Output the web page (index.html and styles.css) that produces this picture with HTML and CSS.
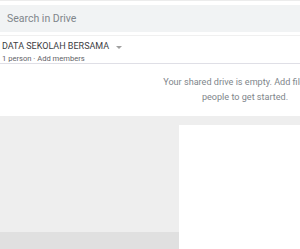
FILE: index.html
```html
<!DOCTYPE html>
<html lang="en">
<head>
	<meta charset="UTF-8">
	<title>Shared drive</title>
	<link rel="stylesheet" href="styles.css">
</head>
<body>
	<div class="page">
		<header class="header">
			<div class="search">Search in Drive</div>
		</header>
		<div class="driveInfo">
			<div class="driveName">
				DATA SEKOLAH BERSAMA
				<span class="caret"></span>
			</div>
			<div class="members">1 person · Add members</div>
		</div>
		<div class="empty">
			Your shared drive is empty. Add files and<br>
			people to get started.
		</div>
		<div class="lower">
			<div class="side">
				<div class="sideFill"></div>
				<div class="sideFoot"></div>
			</div>
			<div class="panel"></div>
		</div>
	</div>
</body>
</html>
```

FILE: styles.css
```css
body{
	margin: 0;padding: 0;
}
.page{
	width: 300px;
	height: 249px;
	overflow: hidden;
	font-family: Roboto, "Liberation Sans", sans-serif;
	display: flex;
	flex-direction: column;
	background: #fff;
}
.header{
	border-top: 1px solid #ececec;
	padding: 4px 0 3px;
	border-bottom: 1px solid #f0f0f0;
}
.search{
	height: 27px;
	line-height: 27px;
	background-color: #f1f3f4;
	padding-left: 7px;
	font-size: 10.5px;
	color: #80868b;
}
.driveInfo{
	padding: 4px 0 0 2px;
	height: 23px;
	border-bottom: 1px solid #dfdfe6;
}
.driveName{
	font-size: 9px;
	line-height: 13px;
	color: #3c4043;
	display: flex;
	align-items: center;
}
.caret{
	display: inline-block;
	width: 0;
	height: 0;
	margin-left: 7px;
	margin-top: 2px;
	border-left: 3px solid transparent;
	border-right: 3px solid transparent;
	border-top: 3px solid #a0a0a0;
}
.members{
	font-size: 7.6px;
	line-height: 11px;
	color: #5f6368;
}
.empty{
	margin: 11px 0 0 163px;
	width: 164px;
	text-align: center;
	white-space: nowrap;
	font-size: 9.1px;
	line-height: 15px;
	color: #80868b;
	height: 41px;
}
.lower{
	flex: 1;
	display: flex;
	background-color: #eeeeee;
	padding-top: 9px;
}
.side{
	width: 179px;
	display: flex;
	flex-direction: column;
	margin-top: -9px;
}
.sideFill{
	flex: 1;
}
.sideFoot{
	height: 17px;
	background-color: #e0e0e0;
}
.panel{
	flex: 1;
	background-color: #fff;
}
```
